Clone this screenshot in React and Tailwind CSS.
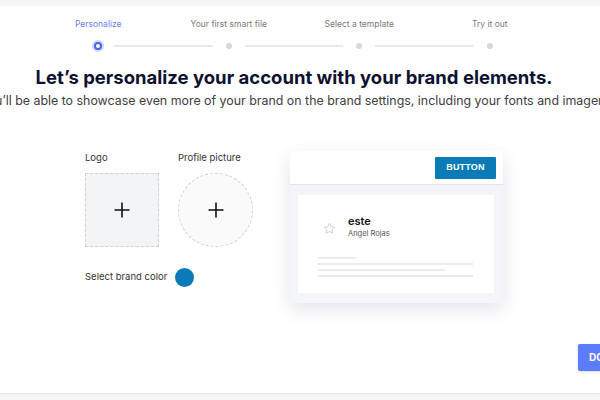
import React from "react";

function Plus() {
  return (
    <svg width="18" height="18" viewBox="0 0 18 18" fill="none">
      <path d="M9 1.5V16.5M1.5 9H16.5" stroke="#111" strokeWidth="1.6" />
    </svg>
  );
}

function Star() {
  return (
    <svg width="13" height="13" viewBox="0 0 24 24" fill="none" stroke="#c9c9c9" strokeWidth="1.6" strokeLinejoin="round">
      <path d="M12 2.5l2.9 6.2 6.7.8-5 4.6 1.4 6.7L12 17.4l-5.9 3.4 1.4-6.7-5-4.6 6.7-.8z" />
    </svg>
  );
}

function Dot() {
  return (
    <div className="w-[12px] h-[12px] flex items-center justify-center">
      <div className="w-[6px] h-[6px] rounded-full bg-[#d8d8dc]" />
    </div>
  );
}

function Line() {
  return <div className="flex-1 mx-[10px] h-[1.5px] bg-[#e8e8ec]" />;
}

export default function App() {
  return (
    <div className="w-[600px] h-[400px] bg-white flex flex-col overflow-hidden font-['Inter',sans-serif]">
      <div className="h-[6px] bg-[#f5f5f6] shrink-0" />
      <div className="flex-1 flex flex-col">
        <div className="w-[588px] flex flex-col items-center">
          <div className="mt-[12px] w-[522px] grid grid-cols-4 text-[8.5px] leading-[12px] text-center text-[#7a7a7a]">
            <div className="text-[#6b7cf6]">Personalize</div>
            <div>Your first smart file</div>
            <div>Select a template</div>
            <div>Try it out</div>
          </div>
          <div className="mt-[10px] w-[522px] px-[59.25px] flex items-center h-[12px]">
            <div className="w-[12px] h-[12px] rounded-full bg-[#d3d9ff] flex items-center justify-center">
              <div className="w-[8px] h-[8px] rounded-full border-[2.5px] border-[#4a62f2] bg-white" />
            </div>
            <Line />
            <Dot />
            <Line />
            <Dot />
            <Line />
            <Dot />
          </div>
          <h1 className="mt-[13px] text-[18.5px] leading-[24px] font-bold text-[#0c1130] whitespace-nowrap">
            Let’s personalize your account with your brand elements.
          </h1>
          <div className="w-full flex justify-center mt-[4px] pl-[5px]">
            <p className="text-[12.4px] leading-[16px] text-[#404040] whitespace-nowrap shrink-0">
              You’ll be able to showcase even more of your brand on the brand settings, including your fonts and imagery.
            </p>
          </div>
          <div className="mt-[42px] flex gap-[37px]">
            <div className="flex flex-col pt-[1px]">
              <div className="flex gap-[19px]">
                <div className="flex flex-col">
                  <div className="text-[9.5px] leading-[12px] text-[#333]">Logo</div>
                  <div className="mt-[9px] w-[74px] h-[74px] bg-[#f3f4f6] border border-dashed border-[#cfd1d6] flex items-center justify-center">
                    <Plus />
                  </div>
                </div>
                <div className="flex flex-col">
                  <div className="text-[9.5px] leading-[12px] text-[#333]">Profile picture</div>
                  <div className="mt-[9px] w-[75px] h-[74px] rounded-full bg-[#fafafa] border border-dashed border-[#cfd1d6] flex items-center justify-center">
                    <Plus />
                  </div>
                </div>
              </div>
              <div className="mt-[21px] flex items-center gap-[8px]">
                <span className="text-[9.5px] text-[#333]">Select brand color</span>
                <div className="w-[19px] h-[19px] rounded-full bg-[#0a7bb6]" />
              </div>
            </div>
            <div className="w-[213px] h-[152px] flex flex-col rounded-[2px] shadow-[0_6px_18px_rgba(40,50,100,0.13)] overflow-hidden">
              <div className="h-[34px] bg-white border-b border-[#e4e6ec] flex items-center justify-end pr-[7px] shrink-0">
                <div className="w-[61px] h-[22px] bg-[#0a7bb6] rounded-[1px] flex items-center justify-center text-white text-[9px] font-bold tracking-[0.2px] font-['Liberation_Sans',sans-serif]">
                  BUTTON
                </div>
              </div>
              <div className="flex-1 bg-[#f4f5f8] pt-[10px] pl-[8px] pr-[9px] pb-[10px]">
                <div className="h-full bg-white flex flex-col pl-[20px]">
                  <div className="mt-[20px] flex items-center">
                    <div className="ml-[5px] mt-[2px]"><Star /></div>
                    <div className="ml-[12px] flex flex-col">
                      <span className="text-[11px] leading-[13px] font-semibold text-[#111]">este</span>
                      <span className="text-[7.5px] leading-[11px] text-[#555]">Angel Rojas</span>
                    </div>
                  </div>
                  <div className="mt-[18px] w-[38px] h-[1.5px] bg-[#ebebee]" />
                  <div className="mt-[4.5px] w-[155px] h-[1.5px] bg-[#ebebee]" />
                  <div className="mt-[4.5px] w-[127px] h-[1.5px] bg-[#ebebee]" />
                  <div className="mt-[4.5px] w-[155px] h-[1.5px] bg-[#ebebee]" />
                </div>
              </div>
            </div>
          </div>
        </div>
        <div className="flex justify-end mt-[41px]">
          <div className="w-[62px] h-[27px] -mr-[40px] bg-[#5b7cfb] rounded-[2px] flex items-center pl-[11px] text-white text-[10px] font-bold shadow-[0_1px_3px_rgba(0,0,0,0.15)]">
            DONE
          </div>
        </div>
      </div>
      <div className="h-[7px] bg-[#f5f5f6] border-t border-[#e4e4ea] shrink-0" />
    </div>
  );
}
